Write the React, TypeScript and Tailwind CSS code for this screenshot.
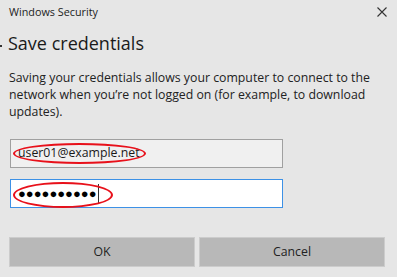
export default function App() {
  return (
    <div
      className="relative flex h-[277px] w-[397px] flex-col overflow-hidden bg-[#e6e6e6] text-[#1a1a1a]"
      style={{ fontFamily: '"Open Sans", "Noto Sans", sans-serif' }}
    >
      {/* title bar */}
      <div className="flex h-[24px] items-center justify-between pl-[9px] pr-[6px]">
        <span className="text-[10.8px] text-[#222]">Windows Security</span>
        <svg width="18" height="18" viewBox="0 0 18 18" className="text-[#333]">
          <path d="M4.5 4.5 L13.5 13.5 M13.5 4.5 L4.5 13.5" stroke="currentColor" strokeWidth="1.1" />
        </svg>
      </div>

      <div className="relative mt-[5px] pl-[8px] text-[18px] leading-[28px] text-[#1a1a1a]">
        <span className="absolute left-[0px] top-[16px] h-[2px] w-[2px] bg-[#333]" />
        Save credentials
      </div>

      <p className="mt-[12px] pl-[9px] pr-[10px] text-[12.3px] leading-[17px] text-[#222]">
        Saving your credentials allows your computer to connect to the network when you’re not logged on (for example, to download updates).
      </p>

      <div className="relative ml-[10px] mt-[19px] flex h-[29px] w-[273px] items-center border border-[#a0a0a0] bg-[#f0f0f0] pl-[7px] text-[12.3px] text-[#1a1a1a]">
        user01@example.net
        <span className="absolute left-[2px] top-[3px] h-[21px] w-[133px] rounded-[50%] border-[2.5px] border-[#e8101a]" />
      </div>

      <div className="relative ml-[10px] mt-[11px] flex h-[29px] w-[273px] items-center border border-[#3d91e6] bg-white pl-[7px]">
        <span className="text-[13px] leading-none tracking-[0px] text-black">●●●●●●●●●●</span>
        <span className="ml-[1px] h-[20px] w-px bg-[#333]" />
        <span className="absolute left-[2px] top-[2px] h-[26px] w-[100px] rounded-[50%] border-[2.5px] border-[#e8101a]" />
      </div>

      <div className="mt-[29px] flex gap-[4px] pl-[9px]">
        <button className="h-[30px] w-[186px] border border-[#cccccc] bg-[#b8b8b8] text-[12.3px] text-[#222]">OK</button>
        <button className="h-[30px] w-[186px] border border-[#cccccc] bg-[#b8b8b8] text-[12.3px] text-[#222]">Cancel</button>
      </div>
    </div>
  );
}
